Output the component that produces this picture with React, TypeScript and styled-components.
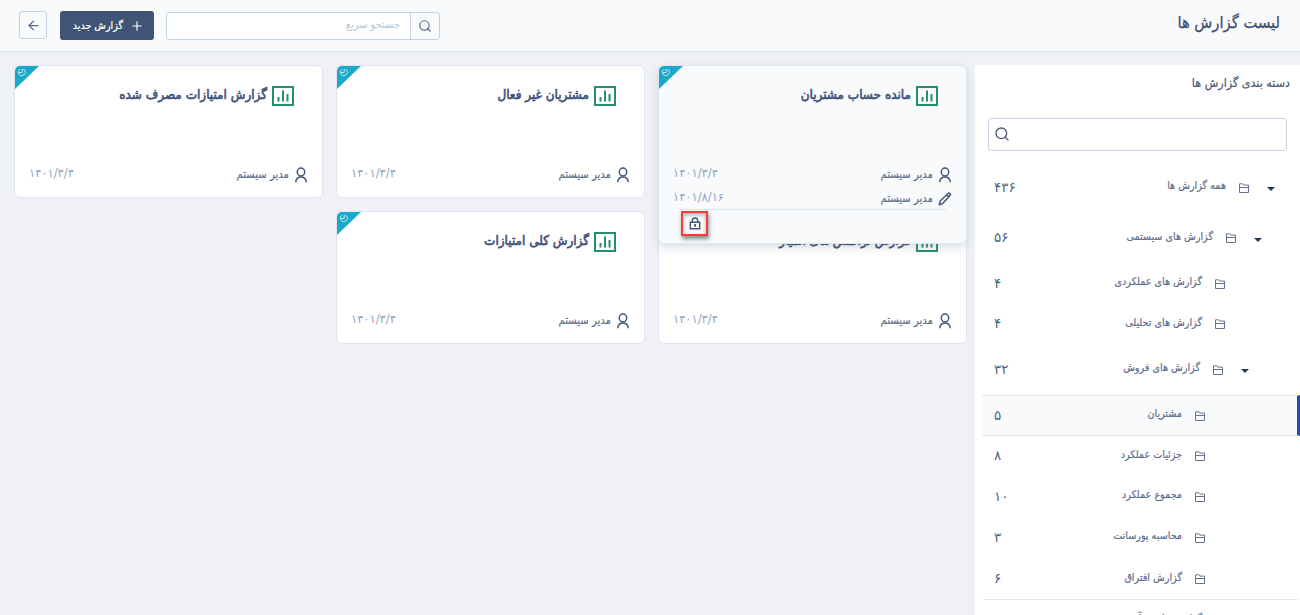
import React from 'react';
import styled, { createGlobalStyle } from 'styled-components';
import { ArrowLeft, Plus, Search } from 'lucide-react';

const Global = createGlobalStyle`
  * { box-sizing: border-box; }
  body { margin: 0; background: #eff1f6; overflow: hidden; color: #5b6a89; font-family: 'DejaVu Sans Condensed', 'DejaVu Sans', sans-serif; }
`;

const Page = styled.div`
  direction: rtl;
  height: 615px;
  overflow: hidden;
  display: flex;
  flex-direction: column;
`;

const Header = styled.header`
  flex: none;
  height: 52px;
  display: flex;
  justify-content: space-between;
  padding: 11px 20px 0 19px;
  background: #f8fafc;
  border-bottom: 1px solid #dde3ec;
`;

const Title = styled.h1`
  margin: 0;
  font-size: 16.4px;
  line-height: 23px;
  font-weight: 400;
  color: #3f4d6e;
  white-space: nowrap;
  -webkit-text-stroke: 0.25px currentColor;
`;

const Actions = styled.div`
  display: flex;
  align-items: flex-start;
`;

const QuickSearch = styled.div`
  display: flex;
  width: 274px;
  height: 28px;
  margin-top: 1px;
  border: 1px solid #c3d1e2;
  border-radius: 3px;
  background: #fff;
  overflow: hidden;
`;

const SearchButton = styled.span`
  width: 29px;
  display: grid;
  place-items: center;
  background: #f8fafc;
  color: #56698f;
  border-left: 1px solid #c3d1e2;
`;

const Placeholder = styled.span`
  padding-right: 10px;
  font-size: 11px;
  line-height: 24px;
  color: #b9c4d4;
`;

const PrimaryButton = styled.span`
  display: flex;
  align-items: center;
  gap: 7px;
  width: 94px;
  height: 29px;
  margin-right: 12px;
  padding: 0 10px 2px 0;
  border-radius: 3px;
  background: #405476;
  color: #fff;
  font-size: 10.6px;
  white-space: nowrap;
  -webkit-text-stroke: 0.2px currentColor;
  svg { position: relative; top: 1px; }
`;

const BackButton = styled.span`
  display: grid;
  place-items: center;
  width: 28px;
  height: 28px;
  margin-right: 13px;
  border: 1px solid #c3d1e2;
  border-radius: 3px;
  color: #56698f;
`;

const Body = styled.main`
  flex: 1;
  min-height: 0;
  display: flex;
  gap: 8px;
  padding: 13px 0 0 14px;
`;

const Sidebar = styled.aside`
  flex: none;
  width: 325px;
  background: #fff;
`;

const SideTitle = styled.h2`
  margin: 0;
  padding: 8px 10px 0;
  height: 53px;
  font-size: 12.4px;
  line-height: 20px;
  font-weight: 400;
  color: #4c5776;
  -webkit-text-stroke: 0.2px currentColor;
`;

const SideSearch = styled.div`
  display: flex;
  align-items: center;
  justify-content: flex-end;
  height: 33px;
  margin: 0 13px 11px;
  padding: 0 0 1px 5px;
  border: 1px solid #c6d5e3;
  border-radius: 3px;
  color: #4c5776;
`;

const Row = styled.div<{ $h: number; $indent: number; $active?: boolean; $end?: boolean }>`
  display: flex;
  align-items: center;
  height: ${p => p.$h}px;
  margin-left: 7px;
  padding: 0 ${p => p.$indent - (p.$active ? 3 : 0)}px 0 12px;
  background: ${p => (p.$active ? '#f8fafc' : 'transparent')};
  border-top: 1px solid ${p => (p.$active ? '#e2e7ee' : 'transparent')};
  border-bottom: 1px solid ${p => (p.$active || p.$end ? '#e2e7ee' : 'transparent')};
  ${p => p.$active && 'border-right: 3px solid #1d4fc0;'}
  ${p => p.$end && 'border-radius: 0 0 4px 4px;'}
`;

const Caret = styled.i`
  margin: 3px 0 0 18px;
  border: 4px solid transparent;
  border-top-color: #24385f;
  border-bottom: 0;
`;

const Label = styled.span`
  flex: 1;
  margin-right: 13px;
  padding-bottom: 4px;
  font-size: 10.7px;
  white-space: nowrap;
  -webkit-text-stroke: 0.15px currentColor;
`;

const Count = styled.span`
  padding-bottom: 2px;
  font-family: 'DejaVu Sans', sans-serif;
  font-size: 13.5px;
  line-height: 16px;
  color: #4f5f80;
`;

const Grid = styled.section`
  flex: 1;
  display: grid;
  grid-template-columns: repeat(3, 309px);
  grid-auto-rows: 133px;
  gap: 13px;
  align-content: start;
`;

const Card = styled.article<{ $open?: boolean }>`
  position: relative;
  z-index: ${p => (p.$open ? 2 : 1)};
  height: ${p => (p.$open ? 179 : 133)}px;
  overflow: hidden;
  border: 1px solid #dfe5ee;
  border-radius: 6px;
  background: ${p => (p.$open ? '#f8fafc' : '#fff')};
  ${p => p.$open && 'box-shadow: 0 4px 8px rgba(90, 115, 155, 0.22);'}
`;

const Corner = styled.svg`
  position: absolute;
  left: 0;
  top: 0;
`;

const CardHead = styled.div`
  display: flex;
  gap: 5px;
  height: 97px;
  padding: 20px 28px 0 0;
`;

const CardTitle = styled.h3`
  margin: 0;
  font-size: 13.4px;
  line-height: 18px;
  font-weight: 400;
  color: #42527a;
  white-space: nowrap;
  -webkit-text-stroke: 0.6px currentColor;
`;

const Meta = styled.div`
  display: flex;
  align-items: center;
  height: 24px;
  padding: 0 14px;
`;

const Person = styled.span`
  flex: 1;
  margin-right: 5px;
  padding-bottom: 1px;
  font-size: 11.2px;
  color: #5b6a89;
  -webkit-text-stroke: 0.15px currentColor;
`;

const DateText = styled.span`
  padding-bottom: 4px;
  font-family: 'DejaVu Sans', sans-serif;
  font-size: 11.5px;
  line-height: 14px;
  color: #8fa4c3;
`;

const CardTools = styled.div`
  display: flex;
  justify-content: flex-end;
  margin: -2px 20px 0;
  padding: 1px 0 0 2px;
  border-top: 1px solid #dfe5ee;
`;

const LockFrame = styled.span`
  display: grid;
  place-items: center;
  width: 27px;
  height: 25px;
  border: 2px solid #f93a3a;
  background: #f8fafc;
  box-shadow: 1px 3px 4px rgba(0, 0, 0, 0.45), inset 0 2px 4px rgba(0, 0, 0, 0.3);
`;

const FolderIcon = () => (
  <svg width="10" height="10" viewBox="0 0 10 10" fill="none" stroke="#65718d">
    <path d="M.5 9.500V.800h3.300l1 1.300h4.700v7.400zM.5 4.500h9" />
  </svg>
);

const ChartIcon = () => (
  <svg width="22" height="20" viewBox="0 0 22 20" fill="none" stroke="#239067" strokeWidth="2">
    <path d="M1 1h20v18H1zM6.500 15.500V11M11 15.500V4.500M15.500 15.500V8" />
  </svg>
);

const UserIcon = () => (
  <svg width="14" height="16" viewBox="0 0 14 16" fill="none" stroke="#435579" strokeWidth="1.5">
    <ellipse cx="7" cy="5" rx="3.700" ry="4" />
    <path d="M1.700 15.300c.3-3.300 2.200-5.300 5.300-5.300s5 2 5.300 5.300" />
  </svg>
);

const PenIcon = () => (
  <svg width="14" height="14" viewBox="0 0 14 14" fill="none" stroke="#435579" strokeWidth="1.5" strokeLinejoin="round">
    <path d="M1.300 12.700l.9-3.700 7.800-7.500q1-.8 2 .1t0 2L4.600 11.600zM8.700 2.800l2.300 2.300" />
  </svg>
);

const LockIcon = () => (
  <svg width="12" height="13" viewBox="0 0 12 13" fill="none" stroke="#435579" strokeWidth="1.4">
    <path d="M1.300 5.200h9.400v6.500H1.300zM3.300 5V3.400Q3.500 1 6 1t2.700 2.400V5" />
    <path d="M6 7v2.700" strokeWidth="1.800" />
  </svg>
);

const CornerMark = () => (
  <Corner width="24" height="23" viewBox="0 0 24 23" fill="none">
    <path d="M0 0h24L0 23z" fill="#1ba8c9" />
    <path d="M5 3.200a3.500 3.500 0 1 0 4.500.7M7.200 3v3.500H4M8.500 3l1.200 1.500" stroke="#c8f0f7" strokeWidth=".9" />
  </Corner>
);

type RowData = { label: string; count: string; h: number; indent: number; caret?: boolean; active?: boolean; end?: boolean };

const rows: RowData[] = [
  { label: 'همه گزارش ها', count: '۴۳۶', h: 51, indent: 25, caret: true },
  { label: 'گزارش های سیستمی', count: '۵۶', h: 50, indent: 38, caret: true },
  { label: 'گزارش های عملکردی', count: '۴', h: 41, indent: 75 },
  { label: 'گزارش های تحلیلی', count: '۴', h: 40, indent: 75 },
  { label: 'گزارش های فروش', count: '۳۲', h: 51, indent: 51, caret: true },
  { label: 'مشتریان', count: '۵', h: 41, indent: 95, active: true },
  { label: 'جزئیات عملکرد', count: '۸', h: 40, indent: 95 },
  { label: 'مجموع عملکرد', count: '۱۰', h: 41, indent: 95 },
  { label: 'محاسبه پورسانت', count: '۳', h: 41, indent: 95 },
  { label: 'گزارش افتراق', count: '۶', h: 42, indent: 95, end: true },
  { label: 'گزارش های فرآیند', count: '۹', h: 41, indent: 75 },
];

const cards = [
  { title: 'مانده حساب مشتریان', open: true },
  { title: 'مشتریان غیر فعال' },
  { title: 'گزارش امتیازات مصرف شده' },
  { title: 'گزارش تراکنش های امتیاز' },
  { title: 'گزارش کلی امتیازات' },
];

export default function App() {
  return (
    <Page>
      <Global />
      <Header>
        <Title>لیست گزارش ها</Title>
        <Actions>
          <QuickSearch>
            <SearchButton><Search size={14} strokeWidth={2} /></SearchButton>
            <Placeholder>جستجو سریع</Placeholder>
          </QuickSearch>
          <PrimaryButton><Plus size={14} strokeWidth={2} />گزارش جدید</PrimaryButton>
          <BackButton><ArrowLeft size={15} strokeWidth={2} /></BackButton>
        </Actions>
      </Header>
      <Body>
        <Sidebar>
          <SideTitle>دسته بندی گزارش ها</SideTitle>
          <SideSearch><Search size={16} strokeWidth={2} /></SideSearch>
          {rows.map(r => (
            <Row key={r.label} $h={r.h} $indent={r.indent} $active={r.active} $end={r.end}>
              {r.caret && <Caret />}
              <FolderIcon />
              <Label>{r.label}</Label>
              <Count>{r.count}</Count>
            </Row>
          ))}
        </Sidebar>
        <Grid>
          {cards.map(c => (
            <Card key={c.title} $open={c.open}>
              <CornerMark />
              <CardHead><ChartIcon /><CardTitle>{c.title}</CardTitle></CardHead>
              <Meta><UserIcon /><Person>مدیر سیستم</Person><DateText>۱۴۰۱/۳/۴</DateText></Meta>
              {c.open && (
                <>
                  <Meta><PenIcon /><Person>مدیر سیستم</Person><DateText>۱۴۰۱/۸/۱۶</DateText></Meta>
                  <CardTools><LockFrame><LockIcon /></LockFrame></CardTools>
                </>
              )}
            </Card>
          ))}
        </Grid>
      </Body>
    </Page>
  );
}
